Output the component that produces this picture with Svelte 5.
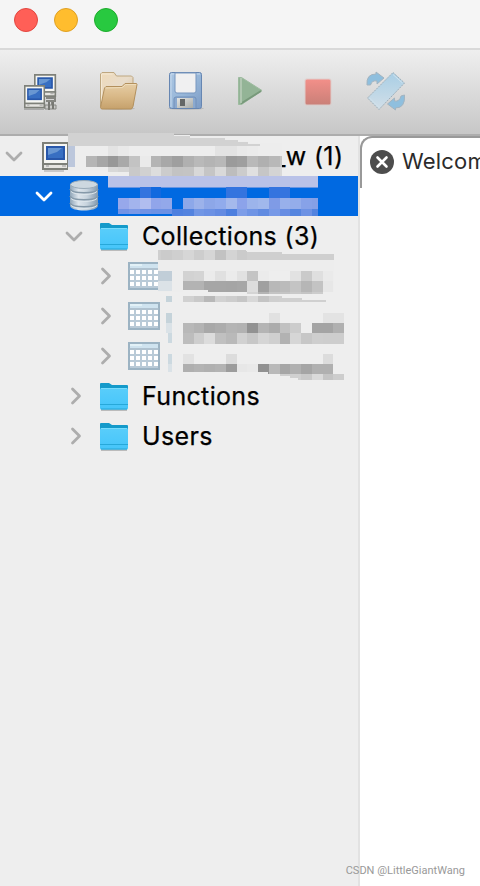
<script lang="ts">
	type Node = {
		label: string;
		icon: 'server' | 'database' | 'folder' | 'table';
		depth: number;
		open: boolean;
		selected?: boolean;
	};

	type Strip = { col: number; y: number; h: number; colors: string };

	const nodes: Node[] = [
		{ label: '_w (1)', icon: 'server', depth: 0, open: true },
		{ label: '', icon: 'database', depth: 1, open: true, selected: true },
		{ label: 'Collections (3)', icon: 'folder', depth: 2, open: true },
		{ label: '', icon: 'table', depth: 3, open: false },
		{ label: '', icon: 'table', depth: 3, open: false },
		{ label: '', icon: 'table', depth: 3, open: false },
		{ label: 'Functions', icon: 'folder', depth: 2, open: false },
		{ label: 'Users', icon: 'folder', depth: 2, open: false }
	];

	// masked names: one strip per row of blocks, '-' leaves a gap
	const cell = 10.75;
	const strips: Strip[] = [
		{ col: 8, y: 10, h: 10, colors: 'ededed ededed e3e3e3 e9e9e9 ededed ededed ededed ededed ededed ededed ededed ededed e3e3e3 e3e3e3 e9e9e9 ebebeb' },
		{ col: 8, y: 20, h: 11, colors: 'b5b5b5 a6a6a6 989898 a9a9a9 c3c3c3 eaeaea b4b4b4 a8a8a8 9f9f9f b0b0b0 b9b9b9 b4b4b4 b8b8b8 9b9b9b 9f9f9f b9b9b9 b0b0b0 b8b8b8' },
		{ col: 10, y: 31, h: 5, colors: 'd8d8d8 d4d4d4' },
		{ col: 12, y: 31, h: 9, colors: 'c9c9c9 d1d1d1 dddddd cccccc c3c3c3 c4c4c4 d8d8d8 c5c5c5 d9d9d9 bdbdbd cccccc e0e0e0 c6c6c6 d4d4d4' },
		{ col: 13, y: 51, h: 11, colors: '3474df 1269df - - - - - - 3474df 3474df - - 3474df 3474df' },
		{ col: 11, y: 62, h: 11, colors: '97a8eb a3b4ed b1bdef 91a5ea 93a8ea - 8da8e9 9cb2ea 8da7e8 91abec a5b9ec 8ca3ea 9cb4eb a1b8ec 7f9be6 98b0eb 94adea 87a2e8 85a0e6' },
		{ col: 11, y: 73, h: 5, colors: '7292e5 7b98e6 7192e5 6d91e4 6d91e4' },
		{ col: 16, y: 73, h: 7, colors: '4e80df 5383df 7196e5 6c91e4 648be2 4d7fdf 7d9de8 6f94e5 618be1 7799e7 678de3 5585df 6d92e4 5384df' },
		{ col: 15, y: 114, h: 10, colors: 'cbcbcb cfcfcf d6d6d6 cdcdcd d6d6d6 c2c2c2 d4d4d4 cbcbcb' },
		{ col: 17, y: 135, h: 10, colors: 'd2d2d2 d4d4d4 ebebeb e0e0e0 ebebeb e1e1e1 c4c4c4 ebebeb eeeeee eeeeee e2e2e2 cacaca dfdfdf eaeaea' },
		{ col: 17, y: 145, h: 11, colors: 'b3b3b3 b3b3b3 a6a6a6 a6a6a6 a5a5a5 a7a7a7 dddddd a0a0a0 b8b8b8 bbbbbb c4c4c4 b6b6b6 c3c3c3 e7e7e7' },
		{ col: 23, y: 156, h: 2, colors: 'd4d4d4 b4b4b4 c4c4c4 c4c4c4 c9c9c9 c4c4c4 cccccc' },
		{ col: 17, y: 160, h: 6, colors: 'd1d1d1 c9c9c9 b8b8b8 d2d2d2 cdcdcd c6c6c6 d8d8d8 c4c4c4 cfcfcf' },
		{ col: 25, y: 177, h: 10, colors: 'e1e1e1 - - - - e3e3e3 e3e3e3' },
		{ col: 17, y: 187, h: 10, colors: 'b8b8b8 b3b3b3 a8a8a8 acacac b4b4b4 b2b2b2 929292 b4b4b4 acacac c1c1c1 cccccc - a4a4a4 a4a4a4 b0b0b0' },
		{ col: 17, y: 197, h: 11, colors: 'bdbdbd cecece dcdcdc c0c0c0 b9b9b9 d1d1d1 c7c7c7 d5d5d5 cfcfcf b2b2b2 d6d6d6 c7c7c7 cecece cdcdcd cdcdcd' },
		{ col: 17, y: 218, h: 10, colors: 'e2e2e2 - - - dcdcdc - - - - - - - - dcdcdc' },
		{ col: 17, y: 228, h: 10, colors: 'afafaf b3b3b3 b0b0b0 b3b3b3 9c9c9c e7e7e7 e9e9e9 919191 b9b9b9 a6a6a6 b0b0b0 a5a5a5 b0b0b0 b0b0b0' },
		{ col: 25, y: 238, h: 6, colors: 'd1d1d1 cfcfcf d0d0d0 c9c9c9 dadada c4c4c4 cdcdcd' }
	];

	const blocks = strips.flatMap(({ col, y, h, colors }) =>
		colors
			.split(' ')
			.map((c, i) => ({ x: (col + i) * cell, y, h, fill: `#${c}`, skip: c === '-' }))
			.filter((b) => !b.skip)
	);
</script>

{#snippet monitor()}
	<path d="M1 1h25v21H1z" fill="#f6f6f2" stroke="#7e8079" stroke-width="2" />
	<path d="M4 4h19v14H4z" fill="#2857aa" />
	<path d="M6 6h15v10H6z" fill="#386fc2" />
	<path d="M6 6h14l-5 4-9 3z" fill="#6997d2" />
	<path d="M1 22h25v5H1z" fill="#e6e5e1" stroke="#7e8079" stroke-width="2" />
	<path d="M4 24h3M20 24h4" stroke="#999" stroke-width="1" />
{/snippet}

<div class="window">
	<header class="titlebar">
		<span class="light close"></span>
		<span class="light minimize"></span>
		<span class="light zoom"></span>
	</header>

	<nav class="toolbar">
		<svg class="connect" width="34" height="37" viewBox="0 0 34 37">
			<path d="M23 24h9v3h-9M29 27v4M23 33h10" fill="none" stroke="#858681" stroke-width="2" />
			<path d="M22 31h11v4H22z" fill="#c9c9c7" stroke="#858681" />
			<path d="M26 28v8M30 28v7" stroke="#777873" stroke-width="2" />
			<g transform="translate(11 0) scale(.82)">{@render monitor()}</g>
			<g transform="translate(1 11) scale(.78 .84)">{@render monitor()}</g>
			<path d="M1 35.5h20" stroke="#aaa" />
		</svg>

		<svg class="open" width="40" height="40" viewBox="0 0 40 40">
			<defs>
				<linearGradient id="back" x2="1" y2="1">
					<stop stop-color="#efdab9" />
					<stop offset=".5" stop-color="#e8dccb" />
					<stop offset="1" stop-color="#d8bb8d" />
				</linearGradient>
				<linearGradient id="front" x2="0" y2="1">
					<stop stop-color="#e6cda5" />
					<stop offset=".5" stop-color="#d9b988" />
					<stop offset="1" stop-color="#c6a16c" />
				</linearGradient>
			</defs>
			<ellipse cx="19" cy="37.5" rx="17" ry="1.5" fill="#a9a9a9" opacity=".6" />
			<path d="M1.5 35V3l1.5-1.500h12l2.500 3.500h15l1.500 1.500V34z" fill="url(#back)" stroke="#bea780" />
			<path d="M2.500 34V3h11" fill="none" stroke="#f5e9d4" />
			<path d="M1.500 36.500 5.500 17l1.500-1.500h16l3-3h11.500l.5 1-4 22-1.500 2.500H2.500z" fill="url(#front)" stroke="#b3905d" />
			<path d="m6.500 17 17-.5 3-3H37" fill="none" stroke="#efddbb" />
		</svg>

		<svg class="save" width="38" height="40" viewBox="0 0 38 40">
			<defs>
				<linearGradient id="disk" x2="1" y2="1">
					<stop stop-color="#acc7e3" />
					<stop offset=".5" stop-color="#98b7d9" />
					<stop offset="1" stop-color="#7c9bc5" />
				</linearGradient>
				<linearGradient id="shutter" x2="1" y2="1">
					<stop stop-color="#e3e4e2" />
					<stop offset="1" stop-color="#a9aca9" />
				</linearGradient>
			</defs>
			<ellipse cx="19" cy="37.500" rx="18" ry="1.500" fill="#aaa" opacity=".6" />
			<rect x="2.500" y="1.500" width="32" height="36" rx="2" fill="url(#disk)" stroke="#6686b2" />
			<path d="M4 36V3h29" fill="none" stroke="#c5d8ec" />
			<path d="M8 2h21v18q0 2-2 2H10q-2 0-2-2z" fill="#f0f0f1" stroke="#7897bf" />
			<path d="M7 37V28q0-2 2-2h18q2 0 2 2v9" fill="#8ba9cf" stroke="#7290b9" />
			<path d="M10 27h16v10H10z" fill="url(#shutter)" />
			<path d="M13 28h5v7h-5z" fill="#646767" />
		</svg>

		<svg class="run" width="26" height="30" viewBox="0 0 26 30">
			<path d="M1.500 1.500h3L25 14.500 4.500 28.500h-3z" fill="#93b496" stroke="#9dbb9f" />
			<path d="M4 27.500 24 15" fill="none" stroke="#78997b" stroke-width="2" />
			<path d="M4 2v25" stroke="#bbceba" stroke-width="1.500" />
		</svg>

		<svg class="stop" width="28" height="28" viewBox="0 0 28 28">
			<defs>
				<linearGradient id="stop" x2="0" y2="1">
					<stop stop-color="#f28f89" />
					<stop offset="1" stop-color="#ca8078" />
				</linearGradient>
			</defs>
			<rect x=".5" y=".5" width="27" height="27" rx="2" fill="#dfc4c2" opacity=".65" />
			<rect x="1.500" y="1.500" width="25" height="25" rx="1.500" fill="url(#stop)" />
		</svg>

		<svg class="rotate" width="42" height="40" viewBox="0 0 42 40">
			<defs>
				<linearGradient id="sheet" x2="0" y2="1">
					<stop stop-color="#a8cee5" />
					<stop offset="1" stop-color="#d2dfe8" />
				</linearGradient>
			</defs>
			<g fill="#8fbfde" stroke="#a3b4c0" stroke-width="1" stroke-linejoin="round">
				<path d="M2 14Q1 3 11 3V1l8 6-7 6v-3Q7 9 5.500 14z" />
				<path d="M39.500 24q1 13-9 13v2l-8-6 7-6v3q5 1 6.500-5z" />
			</g>
			<path d="M28 1.500 39.500 12 14 38.500 2.500 27z" fill="url(#sheet)" stroke="#9daeb9" stroke-dasharray="2 1" />
			<path d="m28 3.500 9.500 8.500M4.500 27 14 36.500" fill="none" stroke="#d1e3ee" />
		</svg>
	</nav>

	<div class="workspace">
		<aside class="tree">
			{#each nodes as node}
				<div class="row depth-{node.depth}" class:selected={node.selected}>
					<svg class="chevron" class:expanded={node.open} width="18" height="18" viewBox="0 0 18 18">
						{#if node.open}
							<path d="m2 6 7 7 7-7" />
						{:else}
							<path d="m7.500 2 7 7-7 7" />
						{/if}
					</svg>
					{#if node.icon === 'server'}
						<svg class="icon server" width="27" height="30" viewBox="0 0 27 30">
							{@render monitor()}
							<path d="M2 29h20" stroke="#c8c8c8" stroke-width="2" />
						</svg>
					{:else if node.icon === 'database'}
						<svg class="icon database" width="30" height="32" viewBox="0 0 30 32">
							<defs>
								<linearGradient id="cylinder">
									<stop stop-color="#8fa5b8" />
									<stop offset=".3" stop-color="#dde5ec" />
									<stop offset=".6" stop-color="#c8d4de" />
									<stop offset="1" stop-color="#8299ae" />
								</linearGradient>
							</defs>
							<path d="M1 4v22c1 6 27 6 28 0V4z" fill="url(#cylinder)" />
							<path d="M1 9c2 5 26 5 28 0M1 16c2 5 26 5 28 0M1 23c2 5 26 5 28 0" fill="none" stroke="#8599a9" stroke-width="1.600" />
							<path d="M2 11.500c4 4 22 4 26 0M2 18.500c4 4 22 4 26 0M2 25.500c4 4 22 4 26 0" fill="none" stroke="#dce5eb" />
							<ellipse cx="15" cy="4.500" rx="13.500" ry="4" fill="#cdd8e0" stroke="#9aabb8" />
						</svg>
					{:else if node.icon === 'folder'}
						<svg class="icon folder" width="30" height="29" viewBox="0 0 30 29">
							<defs>
								<linearGradient id="folder" x2="0" y2="1">
									<stop stop-color="#59cdfa" />
									<stop offset="1" stop-color="#45c5fa" />
								</linearGradient>
							</defs>
							<path d="M2 28h26" stroke="#bbb" stroke-width="2" />
							<path d="M1 26V2q0-1 1-1h8l3 2h15q1 0 1 1v22z" fill="#149aca" />
							<path d="M1 7.500q0-1.500 1.500-1.500h25Q29 6 29 7.500V26q0 1.500-1.500 1.500h-25Q1 27.500 1 26z" fill="url(#folder)" />
							<path d="M1 22.500h28M2 27h26" stroke="#27a8d9" />
							<path d="M2 6.500h26" stroke="#77dcfc" />
						</svg>
					{:else}
						<svg class="icon table" width="32" height="28" viewBox="0 0 32 28">
							<path d="M1 1h30v26H1z" fill="#b9cad7" stroke="#9cb3c3" stroke-width="2" />
							<path d="M2 2h28v4H2z" fill="#cfe3ef" />
							<path d="M2 3h12" stroke="#e2f1f7" stroke-width="2" />
							<path d="M1 7h30" stroke="#a7bac8" />
							{#each [8, 14, 20] as y}
								{#each [2, 8, 14, 20, 26] as x}
									<rect {x} {y} width="4" height="4" fill="#fff" />
								{/each}
							{/each}
						</svg>
					{/if}
					<span class="label">{node.label}</span>
				</div>
			{/each}

			<svg class="mask" width="358" height="260" viewBox="0 -6 358 260" shape-rendering="crispEdges">
				<defs>
					<clipPath id="edges">
						<path d="M0-6H282V40H318V80H358V130H334V158H358V187H346V254H0z" />
					</clipPath>
				</defs>
				<g clip-path="url(#edges)">
					<path d="M68-3H174V-1H190V0H230V5H248V7H282V41H108V35H68z" fill="#ededed" />
					<path d="M68-3H174V0H190V2H225V4H238V6H248V8H260V10H68z" fill="#d2d2d2" />
					<path d="M68 10h7v21h-7z" fill="#bcc7dc" />
					<path d="M279 20h3v11h-3z" fill="#c4c4c4" />
					<path d="M279 31h3v9h-3z" fill="#d8d8d8" />
					<path d="M108 40h210v11H108z" fill="#b9c2e8" />
					<path d="M108 51h210v1H108z" fill="#6795e3" />
					<path d="M158 114H246V116H282V118H334V156H158z" fill="#ededed" />
					<path d="M158 114H246V116H282V118H334V124H158z" fill="#cfcfcf" />
					<path d="M158 135h14v10h-14z" fill="#c1ced8" />
					<path d="M158 145h14v10h-14z" fill="#dbe2e7" />
					<path d="M166 160h6v6h-6zM166 177h6v10h-6z" fill="#c5d3da" />
					<path d="M166 187h6v10h-6z" fill="#dae2e7" />
					<path d="M168 197h4v10h-4zM168 218h4v10h-4z" fill="#ccd9e0" />
					<path d="M168 228h4v8h-4z" fill="#dae2e7" />
					{#each blocks as b}
						<rect x={b.x} y={b.y} width={cell + 0.2} height={b.h} fill={b.fill} />
					{/each}
					<path d="M246 113h36v2h-36zM282 113h52v5h-52z" fill="#eee" />
					<path d="M279 160h3v2h20v2h24v2h-47z" fill="#d0d0d0" />
					<path d="M183 154h25v2h-25z" fill="#eee" />
					<path d="M183 236h85v2h12v2h10v2h8v3H183z" fill="#eee" />
				</g>
			</svg>
		</aside>

		<main class="editor">
			<div class="tab">
				<svg width="24" height="24" viewBox="0 0 24 24">
					<circle cx="12" cy="12" r="12" fill="#4d4d4d" />
					<path d="m7.500 7.500 9 9m0-9-9 9" stroke="#fff" stroke-width="2.600" stroke-linecap="round" />
				</svg>
				<span>Welcome</span>
			</div>
		</main>
	</div>
	<span class="watermark">CSDN @LittleGiantWang</span>
</div>

<style>
	:global(body) {
		margin: 0;
		overflow: hidden;
	}

	.window {
		position: relative;
		width: 480px;
		height: 886px;
		display: flex;
		flex-direction: column;
		overflow: hidden;
		background: #fff;
		color: #000;
		font-family: Inter, 'Liberation Sans', sans-serif;
	}

	.titlebar {
		box-sizing: border-box;
		height: 50px;
		padding: 8px 14px;
		display: flex;
		gap: 16px;
		background: #f5f5f5;
		border-bottom: 2px solid #d9d9d9;
	}

	.light {
		box-sizing: border-box;
		width: 24px;
		height: 24px;
		border-radius: 50%;
	}

	.close {
		background: #ff5f57;
		border: 1px solid #e2463f;
	}

	.minimize {
		background: #ffbd2e;
		border: 1px solid #dfa023;
	}

	.zoom {
		background: #28c940;
		border: 1px solid #1dac2b;
	}

	.toolbar {
		box-sizing: border-box;
		height: 86px;
		padding: 21px 0 0 23px;
		display: flex;
		align-items: flex-start;
		background: linear-gradient(#efefef, #c7c7c7);
		border-bottom: 2px solid #adadad;
	}

	.connect {
		margin-top: 3px;
	}

	.open {
		margin-left: 42px;
	}

	.save {
		margin-left: 28px;
	}

	.run {
		margin: 5px 0 0 32px;
	}

	.stop {
		margin: 7px 0 0 41px;
	}

	.rotate {
		margin-left: 33px;
	}

	.workspace {
		flex: 1;
		display: flex;
	}

	.tree {
		position: relative;
		width: 358px;
		background: #eee;
		border-right: 2px solid #e2e2e2;
	}

	.row {
		height: 40px;
		display: flex;
		align-items: center;
	}

	.depth-0 {
		padding-left: 5px;
	}

	.depth-1 {
		padding-left: 35px;
	}

	.depth-2 {
		padding-left: 65px;
	}

	.depth-3 {
		padding-left: 95px;
	}

	.selected {
		background: #0069e1;
	}

	.chevron {
		flex: none;
		fill: none;
		stroke: #adadad;
		stroke-width: 2.8;
		stroke-linecap: round;
		stroke-linejoin: round;
	}

	.selected .chevron {
		stroke: #fff;
	}

	.icon {
		flex: none;
		margin-left: 16px;
	}

	.folder {
		margin-top: 1px;
	}

	.database {
		margin-bottom: 1px;
	}

	.server {
		margin: 2px 0 0 19px;
	}

	.table {
		margin-left: 15px;
	}

	.label {
		margin-left: 13px;
		font-size: 25px;
		line-height: 40px;
		letter-spacing: 0.34px;
		white-space: nowrap;
		-webkit-text-stroke: 0.25px #000;
	}

	.server + .label {
		margin-left: 205px;
	}

	.mask {
		position: absolute;
		left: 0;
		top: -6px;
	}

	.editor {
		flex: 1;
		min-width: 0;
		overflow: hidden;
	}

	.tab {
		box-sizing: border-box;
		width: 140px;
		height: 52px;
		padding: 0 0 2px 8px;
		display: flex;
		align-items: center;
		gap: 8px;
		border-top: 2px solid #999;
		border-left: 2px solid #999;
		border-top-left-radius: 12px;
		color: #2b2b2b;
		font-size: 22px;
		letter-spacing: 0.2px;
	}

	.tab svg {
		flex: none;
	}

	.tab span {
		margin-top: -2px;
	}

	.watermark {
		position: absolute;
		right: 15px;
		bottom: 8px;
		color: #999;
		font: 11px/14px Roboto, sans-serif;
	}
</style>
